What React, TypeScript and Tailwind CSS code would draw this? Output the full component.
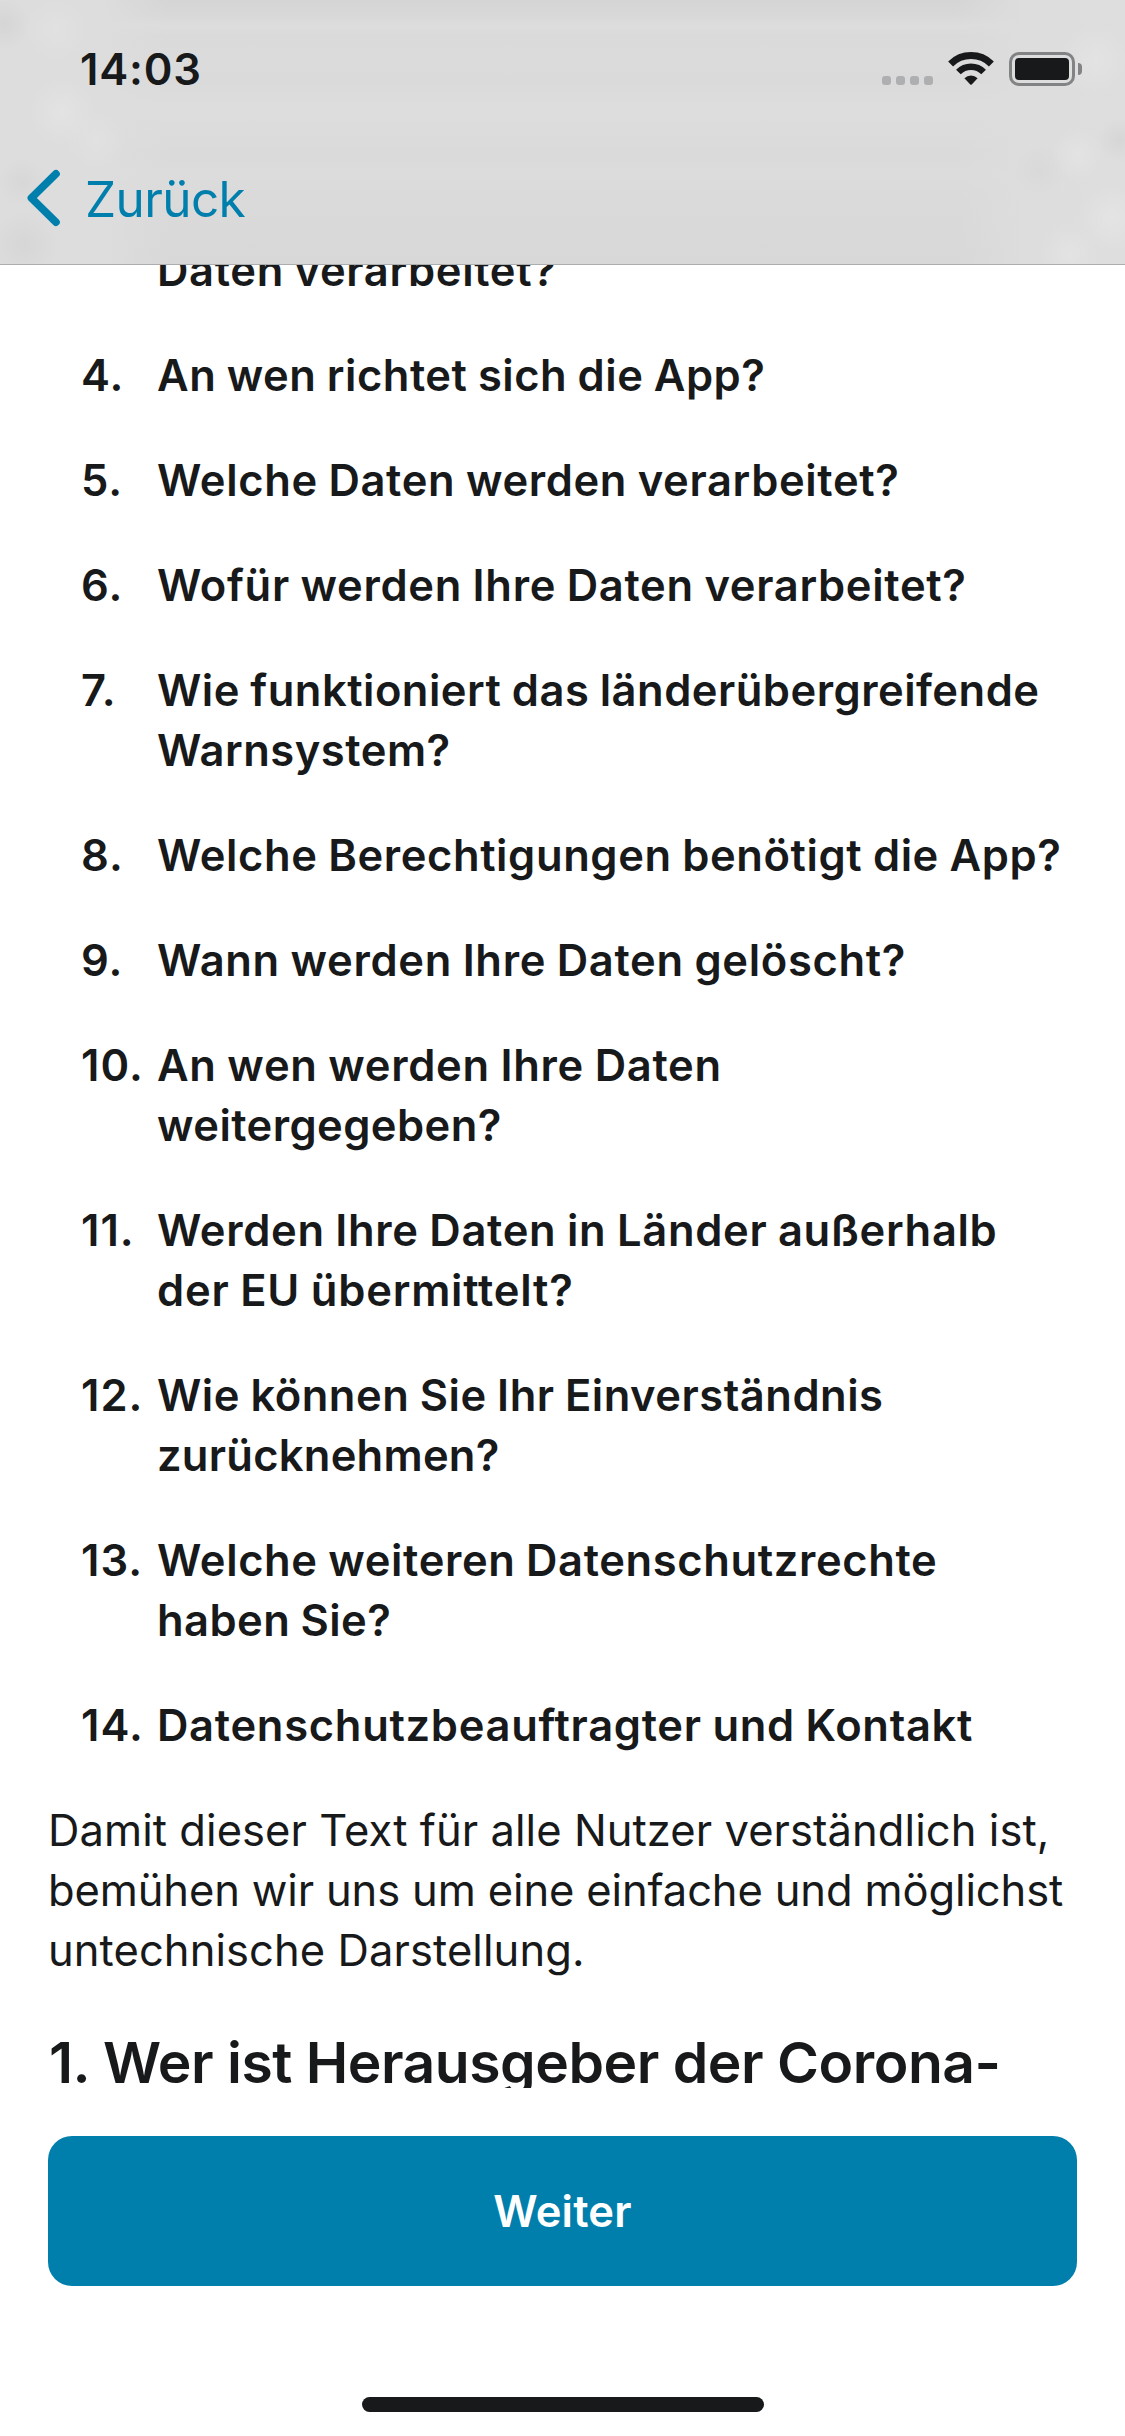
type Line = { text: string; tracking: string };

type Entry = { number: string; lines: Line[] };

const entries: Entry[] = [
  { number: "", lines: [{ text: "Daten verarbeitet?", tracking: "tracking-[0.65px]" }] },
  { number: "4.", lines: [{ text: "An wen richtet sich die App?", tracking: "tracking-[0.5px]" }] },
  { number: "5.", lines: [{ text: "Welche Daten werden verarbeitet?", tracking: "tracking-[0.64px]" }] },
  { number: "6.", lines: [{ text: "Wofür werden Ihre Daten verarbeitet?", tracking: "tracking-[0.68px]" }] },
  {
    number: "7.",
    lines: [
      { text: "Wie funktioniert das länderübergreifende", tracking: "tracking-[0.48px]" },
      { text: "Warnsystem?", tracking: "tracking-[0.51px]" },
    ],
  },
  { number: "8.", lines: [{ text: "Welche Berechtigungen benötigt die App?", tracking: "tracking-[0.6px]" }] },
  { number: "9.", lines: [{ text: "Wann werden Ihre Daten gelöscht?", tracking: "tracking-[0.68px]" }] },
  {
    number: "10.",
    lines: [
      { text: "An wen werden Ihre Daten", tracking: "tracking-[0.7px]" },
      { text: "weitergegeben?", tracking: "tracking-[0.42px]" },
    ],
  },
  {
    number: "11.",
    lines: [
      { text: "Werden Ihre Daten in Länder außerhalb", tracking: "tracking-[0.67px]" },
      { text: "der EU übermittelt?", tracking: "tracking-[0.78px]" },
    ],
  },
  {
    number: "12.",
    lines: [
      { text: "Wie können Sie Ihr Einverständnis", tracking: "tracking-[0.5px]" },
      { text: "zurücknehmen?", tracking: "tracking-[0.25px]" },
    ],
  },
  {
    number: "13.",
    lines: [
      { text: "Welche weiteren Datenschutzrechte", tracking: "tracking-[0.62px]" },
      { text: "haben Sie?", tracking: "tracking-[0.42px]" },
    ],
  },
  { number: "14.", lines: [{ text: "Datenschutzbeauftragter und Kontakt", tracking: "tracking-[0.7px]" }] },
];

const intro: Line[] = [
  { text: "Damit dieser Text für alle Nutzer verständlich ist,", tracking: "tracking-[0.07px]" },
  { text: "bemühen wir uns um eine einfache und möglichst", tracking: "tracking-[-0.13px]" },
  { text: "untechnische Darstellung.", tracking: "tracking-[0.08px]" },
];

function Wifi() {
  return (
    <svg width="46" height="33" viewBox="0 0 46 33" fill="none" className="mr-[15px]">
      <path d="M2.6 11.9 A29 29 0 0 1 43.4 11.9" stroke="#17191a" strokeWidth="7" />
      <path d="M10.4 20 A17.8 17.8 0 0 1 35.6 20" stroke="#17191a" strokeWidth="6.6" />
      <path d="M16.4 26.3 A9.3 9.3 0 0 1 29.6 26.3 L23.7 32.4 Q23 33 22.3 32.4 Z" fill="#17191a" />
    </svg>
  );
}

function Battery() {
  return (
    <div className="flex items-center gap-[3px]">
      <div className="h-[34px] w-[66px] rounded-[10px] border-[3px] border-[#828384] p-[3px]">
        <div className="h-full w-full rounded-[4px] bg-[#17191a]" />
      </div>
      <div className="h-[12px] w-[4px] rounded-r-full bg-[#828384]" />
    </div>
  );
}

export default function App() {
  return (
    <div className="flex h-[2436px] w-[1125px] flex-col overflow-hidden bg-white font-['Inter',sans-serif] text-[43.5px] leading-[60px] text-[#17191a]">
      <header className="h-[265px] shrink-0 border-b border-[#acadae] bg-[radial-gradient(circle_at_62px_112px,#e3e3e3,transparent_34px),radial-gradient(circle_at_96px_140px,#e1e1e1,transparent_30px),radial-gradient(circle_at_56px_30px,#e1e1e1,transparent_32px),radial-gradient(circle_at_4px_24px,#d5d5d5,transparent_26px),radial-gradient(circle_at_24px_245px,#d6d6d6,transparent_34px),radial-gradient(circle_at_22px_182px,#d7d7d7,transparent_24px),radial-gradient(circle_at_1095px_60px,#e3e3e3,transparent_34px),radial-gradient(circle_at_1078px_155px,#e3e3e3,transparent_26px),radial-gradient(circle_at_1112px_218px,#e4e4e4,transparent_34px),radial-gradient(circle_at_1070px_254px,#e3e3e3,transparent_30px),radial-gradient(circle_at_1120px_140px,#d6d6d6,transparent_22px),radial-gradient(circle_at_1040px_170px,#d9d9d9,transparent_26px),linear-gradient(90deg,#dddddd_0%,#dddddd_9%,transparent_15%,transparent_85%,#dddddd_91%,#dedede_100%),linear-gradient(180deg,#d5d5d5_0px,#d8d8d8_16px,#dddddd_26px,#dadada_36px,#dbdbdb_60px,#dadada_80px,#dddddd_105px,#dcdcdc_130px,#dadada_155px,#dcdcdc_175px,#dadada_195px,#d9d9d9_235px,#d8d8d8_264px)]">
        <div className="flex h-[132px] items-start justify-between pl-20 pr-[43px] pt-[39px]">
          <span className="font-semibold tracking-[0.8px]">14:03</span>
          <div className="mt-[13px] flex items-start">
            <div className="mr-[15px] mt-6 flex gap-[5px]">
              <span className="size-[9px] rounded-[3px] bg-[#aeafb0]" />
              <span className="size-[9px] rounded-[3px] bg-[#aeafb0]" />
              <span className="size-[9px] rounded-[3px] bg-[#aeafb0]" />
              <span className="size-[9px] rounded-[3px] bg-[#aeafb0]" />
            </div>
            <Wifi />
            <Battery />
          </div>
        </div>
        <nav className="flex h-[132px] items-center pl-[27px] text-[#007fad]">
          <svg width="33" height="60" viewBox="0 0 33 60" fill="none">
            <path d="M29 5.8 L4.4 30 L29 54.2" stroke="currentColor" strokeWidth="7.6" strokeLinecap="round" strokeLinejoin="round" />
          </svg>
          <a className="ml-[25px] pt-px text-[49.5px] tracking-[-0.6px]">Zurück</a>
        </nav>
      </header>

      <main className="h-[1823px] shrink-0 overflow-hidden">
        <ol className="-mt-[25px] flex flex-col gap-[45px] pl-[81px] font-semibold [word-spacing:-1px]">
          {entries.map((entry) => (
            <li key={entry.lines[0].text} className="flex">
              <span className="w-[76px] shrink-0 tracking-[1px]">{entry.number}</span>
              <div className="flex flex-col whitespace-nowrap">
                {entry.lines.map((line) => (
                  <span key={line.text} className={line.tracking}>
                    {line.text}
                  </span>
                ))}
              </div>
            </li>
          ))}
        </ol>
        <p className="mt-[45px] flex flex-col whitespace-nowrap pl-12">
          {intro.map((line) => (
            <span key={line.text} className={line.tracking}>
              {line.text}
            </span>
          ))}
        </p>
        <h2 className="mt-[47px] whitespace-nowrap pl-[49px] text-[57px] font-semibold leading-[72px] tracking-[-0.49px]">
          1. Wer ist Herausgeber der Corona-
        </h2>
      </main>

      <footer className="flex flex-col px-12 pt-12">
        <button className="h-[150px] w-full rounded-[24px] bg-[#007fad] font-semibold tracking-[0.21px] text-white">
          Weiter
        </button>
        <div className="mt-[111px] h-[15px] w-[402px] self-center rounded-full bg-[#17191a]" />
      </footer>
    </div>
  );
}
